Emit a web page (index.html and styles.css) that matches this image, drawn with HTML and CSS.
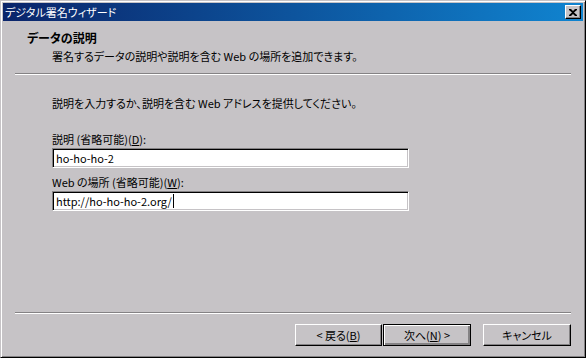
FILE: index.html
```html
<!DOCTYPE html>
<html lang="ja">
<head>
    <meta charset="UTF-8">
    <title>デジタル署名ウィザード</title>
    <link rel="stylesheet" href="styles.css">
</head>
<body>

    <div class="window">
        <div class="titlebar">
            <span class="title">デジタル署名ウィザード</span>
            <div class="close-btn">
                <svg width="8" height="7" viewBox="0 0 8 7">
                    <path d="M0 0h2l2 2 2-2h2v1l-3 2.5 3 2.5v1h-2l-2-2-2 2h-2v-1l3-2.5-3-2.5z" fill="#000"/>
                </svg>
            </div>
        </div>

        <div class="header">
            <div class="header-title">データの説明</div>
            <div class="header-sub">署名するデータの説明や説明を含む Web の場所を追加できます。</div>
        </div>
        <div class="separator"></div>

        <div class="content">
            <div class="intro">説明を入力するか、説明を含む Web アドレスを提供してください。</div>

            <div class="field-label">説明 (省略可能)(<u>D</u>):</div>
            <div class="textbox">ho-ho-ho-2</div>

            <div class="field-label">Web の場所 (省略可能)(<u>W</u>):</div>
            <div class="textbox">http://ho-ho-ho-2.org/<span class="caret"></span></div>
        </div>

        <div class="separator"></div>
        <div class="buttons">
            <div class="btn back">&lt; 戻る(<u>B</u>)</div>
            <div class="btn default">次へ(<u>N</u>) &gt;</div>
            <div class="btn cancel">キャンセル</div>
        </div>
    </div>

</body>
</html>
```

FILE: styles.css
```css
    body {
        margin: 0;
        background: #c6c3c6;
        font-family: "Noto Sans CJK JP", "Liberation Sans", sans-serif;
        font-size: 11px;
        font-feature-settings: "palt";
        color: #000;
    }

    .window {
        width: 586px;
        height: 358px;
        box-sizing: border-box;
        display: flex;
        flex-direction: column;
        background: #c6c3c6;
        border: 1px solid;
        border-color: #c6c3c6 #000 #000 #c6c3c6;
        box-shadow: inset 1px 1px #fff, inset -1px -1px #848284;
        padding: 2px;
    }

    .titlebar {
        height: 18px;
        flex: none;
        display: flex;
        align-items: center;
        justify-content: space-between;
        padding: 0 2px 0 2px;
        background: linear-gradient(to right, #0a246a, #1084d0);
        color: #fff;
    }
    .title {
        line-height: 14px;
    }
    .close-btn {
        width: 16px;
        height: 14px;
        box-sizing: border-box;
        display: flex;
        align-items: center;
        justify-content: center;
        background: #c6c3c6;
        border: 1px solid;
        border-color: #fff #000 #000 #fff;
        box-shadow: inset -1px -1px #848284;
    }

    .header {
        padding: 10px 0 0 24px;
        height: 42px;
        line-height: 14px;
    }
    .header-title {
        font-weight: bold;
        font-size: 12px;
    }
    .header-sub {
        margin: 4px 0 0 25px;
    }

    .separator {
        flex: none;
        margin: 0 12px;
        border-top: 1px solid #848284;
        border-bottom: 1px solid #fff;
        height: 0;
    }

    .content {
        flex: 1;
        padding: 21px 0 0 49px;
        line-height: 14px;
    }
    .intro {
        margin-bottom: 22px;
    }
    .field-label {
        margin-bottom: 2px;
    }
    .textbox {
        width: 357px;
        height: 20px;
        box-sizing: border-box;
        background: #fff;
        border: 1px solid;
        border-color: #848284 #fff #fff #848284;
        box-shadow: inset 1px 1px #000, inset -1px -1px #c6c3c6;
        padding: 0 0 0 3px;
        line-height: 18px;
        margin-bottom: 7px;
        display: flex;
        align-items: center;
    }
    .caret {
        display: inline-block;
        width: 1px;
        height: 14px;
        background: #000;
        margin-left: 1px;
    }

    .buttons {
        flex: none;
        display: flex;
        justify-content: flex-end;
        gap: 1px;
        padding: 10px 12px 9px 0;
    }
    .btn {
        width: 88px;
        height: 22px;
        box-sizing: border-box;
        display: flex;
        align-items: center;
        justify-content: center;
        border: 1px solid;
        border-color: #fff #000 #000 #fff;
        box-shadow: inset -1px -1px #848284;
        line-height: 14px;
    }
    .btn.back {
        width: 87px;
    }
    .btn.default {
        border-color: #000;
        box-shadow: inset 1px 1px #fff, inset -2px -2px #848284, inset -1px -1px #000;
    }
    .btn.cancel {
        margin-left: 11px;
    }
```
